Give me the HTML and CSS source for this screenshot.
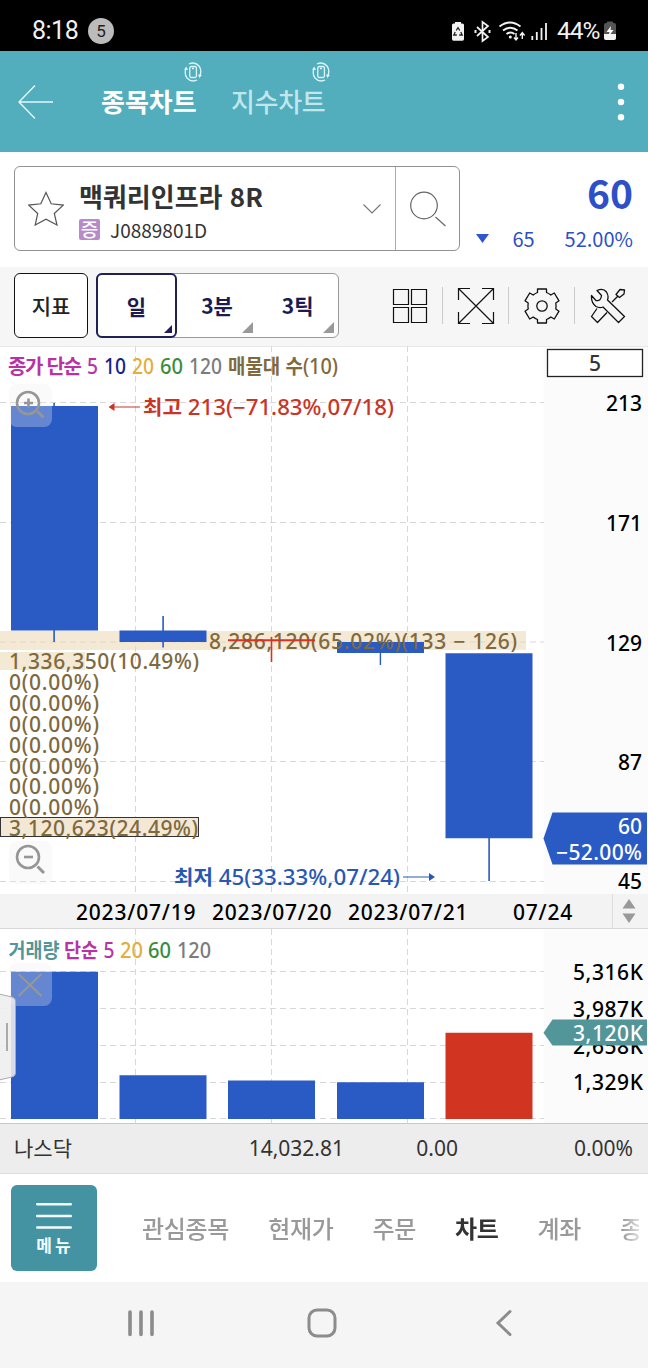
FILE: index.html
```html
<!DOCTYPE html>
<html lang="ko">
<head>
<meta charset="utf-8">
<title>종목차트</title>
<link rel="stylesheet" href="styles.css">
</head>
<body>
<div class="screen">
  <div class="status">
    <span class="clock">8:18</span><span class="count">5</span>
    <svg class="status-icons" width="104" height="24" viewBox="450 18 104 24" fill="none" stroke="#f2f2f2" stroke-width="1.7">
      <path d="M452 24q0-1.500 1.500-1.500h1.500v-1.500h6v1.500h1.500q1.500 0 1.500 1.500v14q0 1.800-1.500 1.800h-9q-1.500 0-1.500-1.800z" fill="#f2f2f2" stroke="none"/>
      <path d="M456.200 29.500l1.800-2.800 1.800 2.800M460.800 31l1.400 3h-3M456.800 34h-3l1.400-3" stroke="#222" stroke-width="1.300"/>
      <path d="M477 26l11 10-5.500 4v-19L488 25l-11 10"/>
      <path d="M475.500 29v3M489.500 29v3" stroke-width="2"/>
      <path d="M499.500 25.500q10.500-8 21 0M503 29.500q7.500-5.500 14.500 0M506.500 33q4-2.800 8 0" stroke-width="2"/>
      <circle cx="510.300" cy="36" r="1.500" fill="#f2f2f2" stroke="none"/>
      <path d="M516 32v7M514 36.500l2 2.500 2-2.500M522.300 38v-6M520 34.500l2.300-2.800 2.300 2.800" stroke-width="1.400"/>
      <path d="M532.300 35v4M536.800 31v8M541.500 27v12M546 22v17" stroke-width="1.800"/>
    </svg>
    <span class="percent">44%</span>
    <svg width="14" height="20" viewBox="0 0 14 20"><path d="M1 4q0-2 2-2h1V.500h6V2h1q2 0 2 2v13q0 2-2 2H3q-2 0-2-2z" fill="#555"/><path d="M1 13h12v4q0 2-2 2H3q-2 0-2-2z" fill="#f2f2f2"/><path d="M8 5L3.500 11H6.500L5.500 15.500 10.500 9H7.500z" fill="#fff"/></svg>
  </div>

  <div class="header">
    <svg class="back" width="36" height="36" viewBox="0 0 36 36" fill="none" stroke="#e4f8fb" stroke-width="1.400"><path d="M17 1.500L1 18l16 16.500M1 18h34"/></svg>
    <div class="htab active"><svg class="rot" width="20" height="20" viewBox="0 0 20 20"><use href="#rotate"/></svg>종목차트</div>
    <div class="htab"><svg class="rot" width="20" height="20" viewBox="0 0 20 20"><use href="#rotate"/></svg>지수차트</div>
    <svg class="more" width="8" height="40" viewBox="0 0 8 40" fill="#fff"><circle cx="4" cy="4.700" r="3.200"/><circle cx="4" cy="20" r="3.200"/><circle cx="4" cy="35.300" r="3.200"/></svg>
  </div>

  <div class="stock">
    <div class="picker">
      <svg class="star" width="36" height="35" viewBox="0 0 36 35" fill="none" stroke="#555" stroke-width="1.200"><path d="M18 1.500l5.200 11.300 12 1.300-8.900 8.400 2.700 11.500L18 28.200 7.200 34l2.500-11.500L.800 14.100l12-1.300z"/></svg>
      <div class="names">
        <div class="name">맥쿼리인프라 8R</div>
        <div class="code"><span class="badge">증</span>J0889801D</div>
      </div>
      <svg class="chev" width="18" height="12" viewBox="0 0 18 12" fill="none" stroke="#777" stroke-width="1.200"><path d="M.500 1.500L9 10l8.500-8.500"/></svg>
      <div class="search"><svg width="36" height="36" viewBox="0 0 36 36" fill="none" stroke="#666" stroke-width="1.200"><circle cx="14" cy="14.500" r="13.300"/><path d="M25.500 26L35.500 35"/></svg></div>
    </div>
    <div class="quote">
      <div class="price">60</div>
      <div class="change"><svg width="13" height="10" viewBox="0 0 13 10"><path d="M0 0h13L6.500 9z" fill="#2f55d0"/></svg><span class="diff">65</span><span>52.00%</span></div>
    </div>
  </div>

  <div class="tools">
    <div class="indicator">지표</div>
    <div class="periods">
      <div class="period on">일</div><div class="period">3분</div><div class="period">3틱</div>
    </div>
    <div class="icons">
      <div class="tool"><svg width="36" height="36" viewBox="0 0 36 36" fill="none" stroke="#111" stroke-width="1.200"><path d="M1.500 1.500h15v15h-15zM19.500 1.500h15v15h-15zM1.500 19.500h15v15h-15zM19.500 19.500h15v15h-15z"/></svg></div>
      <div class="tool"><svg width="38" height="38" viewBox="0 0 38 38" fill="none" stroke="#111" stroke-width="1.200"><path d="M13 1.500H1.500V13M25 1.500h11.500V13M13 36.500H1.500V25M25 36.500h11.500V25M1.500 1.500l35 35M36.500 1.500l-35 35"/></svg></div>
      <div class="tool"><svg width="36" height="36" viewBox="-18 -18 36 36" fill="none" stroke="#111" stroke-width="1.300" stroke-linejoin="round"><circle r="5.200"/><path d="M-4.500-17h9v3.500Q7-12.500 8.800-11L12.300-13 17-5.200 13.800-3Q14.300 0 13.800 3L17 5.200 12.300 13 8.800 11Q7 12.500 4.500 13.500V17h-9V13.500Q-7 12.500-8.800 11L-12.300 13-17 5.200-13.800 3Q-14.300 0-13.800-3L-17-5.200-12.300-13-8.800-11Q-7-12.500-4.500-13.500z"/></svg></div>
      <div class="tool"><svg width="36" height="36" viewBox="0 0 36 36" fill="none" stroke="#111" stroke-width="1.300" stroke-linejoin="round"><path d="M7 2.500Q13-.500 16.500 4 19 8 17.500 12L34.500 28.500 28.500 34.500 13 19Q9.500 20.300 6 18.500 1 15 1.500 7.500L6 12.500Q11 13.500 11.500 7.500z"/><path d="M7 20.500L1.500 28.500 7.500 34.500 17 24.500M22 14L28 8M26 6.500L30 1.500 34.500 2 34 6 29.500 9.500z"/></svg></div>
    </div>
  </div>

  <svg class="chart" width="648" height="548" viewBox="0 346 648 548">
    <rect x="543.500" y="346" width="104.500" height="548" fill="#fbfbfb"/>
    <path class="grid" d="M135.500 346V894M271.500 346V894M407.500 346V894M0 402.500H544M0 522.500H544M0 642H544M0 761.500H544M0 881.500H544"/>
    <path d="M0 346.300H648" stroke="#e3e3e3"/>
    <path d="M0 631H526v19H0zM0 652H85v18H0z" fill="#e9d7b1" fill-opacity=".55"/>
    <g fill="#2a5bc4">
      <path d="M11 406h87v224.500H11zM119.500 630.500h87V642h-87zM337 642h87v11h-87zM445.500 653.300h87v185h-87z"/>
      <path d="M53.300 403h1.600v239h-1.600zM162.300 616h1.600v31.500h-1.600zM379.700 650h1.400v15h-1.400zM488.300 835h1.600v46h-1.600z"/>
    </g>
    <rect x=".500" y="817.500" width="198" height="19" fill="#f2e8d5" stroke="#333"/>
    <g class="txt" fill="#80693d">
      <text x="209" y="648.500" textLength="308">8,286,120(65.02%)(133 − 126)</text>
      <text x="9" y="669" textLength="190">1,336,350(10.49%)</text>
      <text x="9" y="690" textLength="90">0(0.00%)</text>
      <text x="9" y="711" textLength="90">0(0.00%)</text>
      <text x="9" y="731.500" textLength="90">0(0.00%)</text>
      <text x="9" y="752.500" textLength="90">0(0.00%)</text>
      <text x="9" y="773.500" textLength="90">0(0.00%)</text>
      <text x="9" y="794" textLength="90">0(0.00%)</text>
      <text x="9" y="815" textLength="90">0(0.00%)</text>
      <text x="9" y="835.500" textLength="189">3,120,623(24.49%)</text>
    </g>
    <path d="M228 639.300h87v2h-87zM270.700 637h1.600v25h-1.600z" fill="#d63324"/>
    <g class="txt">
      <text class="ko" x="8" y="374" textLength="74" fill="#b832a5">종가 단순</text>
      <text x="87" y="374" textLength="11" lengthAdjust="spacingAndGlyphs" fill="#b832a5">5</text>
      <text x="104" y="374" textLength="22" lengthAdjust="spacingAndGlyphs" fill="#142489">10</text>
      <text x="132" y="374" textLength="22" lengthAdjust="spacingAndGlyphs" fill="#e2ae3c">20</text>
      <text x="160" y="374" textLength="23" lengthAdjust="spacingAndGlyphs" fill="#398e3e">60</text>
      <text x="189" y="374" textLength="33" lengthAdjust="spacingAndGlyphs" fill="#7c7c7c">120</text>
      <text x="228" y="374" textLength="110" lengthAdjust="spacingAndGlyphs" fill="#80693d"><tspan class="ko">매물대 수</tspan>(10)</text>
    </g>
    <text class="txt" x="143" y="415" textLength="251" lengthAdjust="spacingAndGlyphs" fill="#c93426"><tspan class="ko">최고</tspan> 213(−71.83%,07/18)</text>
    <path d="M140 407H113" stroke="#c93426"/><path d="M108.500 407l6-4v8z" fill="#c93426"/>
    <text class="txt" x="174" y="885" textLength="226" lengthAdjust="spacingAndGlyphs" fill="#2858b4"><tspan class="ko">최저</tspan> 45(33.33%,07/24)</text>
    <path d="M403 877h28" stroke="#2858b4"/><path d="M435 877l-6-4v8z" fill="#2858b4"/>
    <g class="txt" text-anchor="end">
      <text x="642" y="411">213</text><text x="642" y="530.500">171</text><text x="642" y="650.500">129</text><text x="642" y="770">87</text><text x="642" y="889">45</text>
    </g>
    <rect x="547.500" y="349.500" width="95" height="27" fill="#fff" stroke="#222" stroke-width="1.300"/>
    <text class="txt" x="595" y="371" text-anchor="middle" fill="#333">5</text>
    <path d="M543.500 838.500L552.500 812.500H647V864.500H552.500z" fill="#2a5bc4"/>
    <g class="txt" text-anchor="end" fill="#fff"><text x="642" y="833.500">60</text><text x="642" y="860" textLength="86">−52.00%</text></g>
    <g fill="#eee" fill-opacity=".3"><rect x="9" y="384" width="43" height="43" rx="8"/><rect x="9" y="841" width="43" height="43" rx="8"/></g>
    <g fill="none" stroke="#969696" stroke-width="2.600"><circle cx="28" cy="403" r="11"/><path d="M24 403h9M28.500 398.500v9"/><path d="M37.500 411.500l6 6" stroke-width="3"/><circle cx="28" cy="857" r="11"/><path d="M24 857h9"/><path d="M37.500 866.500l6.500 6.500" stroke-width="3"/></g>
  </svg>

  <div class="dates">
    <span>2023/07/19</span><span>2023/07/20</span><span>2023/07/21</span><span class="last">07/24</span>
    <div class="sorter"><svg width="14" height="24" viewBox="0 0 14 24" fill="#999"><path d="M7 0l6.500 9.500H.500zM7 24l6.500-9.500H.500z"/></svg></div>
  </div>

  <svg class="chart" width="648" height="194" viewBox="0 929 648 194">
    <rect x="543.500" y="929" width="104.500" height="194" fill="#fbfbfb"/>
    <path class="grid" d="M135.500 929V1123M271.500 929V1123M407.500 929V1123M0 971.500H544M0 1008.500H544M0 1045.500H544M0 1082.500H544M0 1118.500H544"/>
    <path d="M11 971.700h87V1119H11zM119.500 1075.200h87V1119h-87zM228 1080.500h87v38.500h-87zM337 1082.200h87v36.800h-87z" fill="#2a5bc4"/>
    <path d="M445.500 1032.700h87V1119h-87z" fill="#d23422"/>
    <g class="txt">
      <text class="ko" x="8.500" y="958" textLength="51" lengthAdjust="spacingAndGlyphs" fill="#52969a">거래량</text>
      <text class="ko" x="64" y="958" textLength="34" lengthAdjust="spacingAndGlyphs" fill="#b832a5">단순</text>
      <text x="103.500" y="958" textLength="11" lengthAdjust="spacingAndGlyphs" fill="#b832a5">5</text>
      <text x="120" y="958" textLength="23" lengthAdjust="spacingAndGlyphs" fill="#e2ae3c">20</text>
      <text x="148" y="958" textLength="23" lengthAdjust="spacingAndGlyphs" fill="#398e3e">60</text>
      <text x="177" y="958" textLength="34" lengthAdjust="spacingAndGlyphs" fill="#7c7c7c">120</text>
    </g>
    <g class="txt"><text x="573" y="980" textLength="70">5,316K</text><text x="573" y="1017" textLength="70">3,987K</text><text x="573" y="1053.500" textLength="70">2,658K</text><text x="573" y="1090" textLength="70">1,329K</text></g>
    <path d="M543.500 1032.700L552.500 1019.500H647V1045.500H552.500z" fill="#52969a"/>
    <text class="txt" x="573" y="1041" textLength="70" fill="#fff">3,120K</text>
    <rect x="9" y="963" width="43" height="43" rx="8" fill="#eee" fill-opacity=".3"/>
    <path d="M18.500 974l23 22M41.500 974l-23 22" stroke="#969696" stroke-width="2.200"/>
    <path d="M-1 994L12 997q3.500 1 3.500 4v72q0 3-3.500 4L-1 1080z" fill="#eee" fill-opacity=".88" stroke="#aaa"/>
    <path d="M7 1023v28" stroke="#999" stroke-width="1.600"/>
  </svg>

  <div class="index"><span class="iname">나스닥</span><span>14,032.81</span><span>0.00</span><span>0.00%</span></div>

  <div class="tabs">
    <div class="menu"><svg width="36" height="28" viewBox="0 0 36 28" stroke="#f4ffff" stroke-width="2.600" stroke-linecap="round"><path d="M1.300 2.300h33.400M1.300 14h33.400M1.300 25.500h33.400"/></svg><span>메뉴</span></div>
    <div class="tablist"><span>관심종목</span><span>현재가</span><span>주문</span><span class="cur">차트</span><span>계좌</span><span>종목</span></div>
  </div>

  <div class="nav">
    <svg width="28" height="28" viewBox="0 0 28 28" stroke="#8c8c8c" stroke-width="3.600" stroke-linecap="round"><path d="M3 3v22.500M14 3v22.500M25 3v22.500"/></svg>
    <svg width="30" height="30" viewBox="0 0 30 30" fill="none" stroke="#8c8c8c" stroke-width="3"><rect x="2" y="2" width="26" height="26" rx="8"/></svg>
    <svg width="18" height="28" viewBox="0 0 18 28" fill="none" stroke="#8c8c8c" stroke-width="3" stroke-linecap="round"><path d="M15 2.500L3 14l12 11.500"/></svg>
  </div>
</div>
<svg width="0" height="0" class="defs"><defs><g id="rotate" fill="none" stroke="#dff6f9" stroke-width="1.300"><rect x="6.800" y="4.500" width="6.600" height="11" rx="1.500"/><path d="M9 6.500h2M6 1.800Q12-.500 16 4q3 4 1 9.500M14 18.200Q8 20.500 4 16 1 12 3 6.500"/><path d="M1 7.500l2.300-3 1.700 3.500zM15 12.500l4 .5-2.700 3z" fill="#dff6f9" stroke="none"/></g></defs></svg>
</body>
</html>
```

FILE: styles.css
```css
* { box-sizing: border-box; }
body { margin: 0; background: #fff; }
.screen {
  width: 648px; height: 1368px; overflow: hidden;
  display: flex; flex-direction: column;
  font-family: "Noto Sans CJK KR", sans-serif; color: #333;
}
.screen > * { flex: none; }
.defs { position: absolute; }
svg { display: block; flex: none; }

.status { height: 51px; background: #000; color: #f2f2f2; display: flex; align-items: center; padding: 10px 0 0 32px; font-family: Roboto, sans-serif; font-size: 25px; line-height: 40px; }
.clock { width: 56px; letter-spacing: -.5px; }
.count { width: 26px; height: 26px; border-radius: 50%; background: #bbb; color: #222; font-size: 17px; line-height: 26px; text-align: center; }
.status-icons { margin-left: 336px; }
.percent { width: 46px; margin-left: 3px; font-size: 24.5px; letter-spacing: -1px; }

.header { height: 101px; background: #52adbd; display: flex; align-items: center; padding-left: 18px; color: #c2e6eb; }
.htab { position: relative; width: 96px; margin-left: 47px; font-size: 26px; font-weight: 500; line-height: 36px; white-space: nowrap; letter-spacing: -.3px; margin-top: -2px; }
.htab + .htab { margin-left: 34px; }
.htab.active { color: #fff; font-weight: 700; letter-spacing: 0; }
.rot { position: absolute; left: 82px; top: -21px; }
.htab + .htab .rot { left: 80px; }
.more { margin-left: 290px; }

.stock { height: 115px; padding: 14px 15px 0 14px; display: flex; justify-content: space-between; }
.picker { width: 446px; height: 85px; border: 1px solid #929292; border-radius: 6px; display: flex; align-items: center; }
.star { margin-left: 13px; }
.names { margin-left: 15px; width: 270px; padding-top: 5px; }
.name { font-size: 26px; line-height: 34px; font-weight: 700; white-space: nowrap; }
.code { display: flex; align-items: center; font-size: 19px; line-height: 28px; margin-top: 3px; }
.badge { width: 21px; height: 21px; margin-right: 10px; border-radius: 2px; background: #b68bc8; color: #fff; font-size: 19px; line-height: 20px; text-align: center; font-weight: 500; }
.chev { margin-left: 14px; }
.search { margin-left: 14px; height: 83px; width: 64px; border-left: 1px solid #aaa; display: flex; align-items: center; justify-content: center; }
.quote { flex: 1; color: #2d50c8; text-align: right; }
.price { font: 700 39px/52px "Noto Sans CJK KR", sans-serif; }
.change { display: flex; justify-content: flex-end; align-items: center; font-size: 20px; line-height: 34px; margin-top: 4px; }
.diff { margin: 0 30px 0 23px; }

.tools { height: 79px; background: #f6f6f6; display: flex; align-items: flex-start; padding: 6px 0 0 14px; font-size: 21px; font-weight: 500; }
.indicator { width: 74px; height: 65px; border: 1.500px solid #111; border-radius: 6px; background: #fff; line-height: 62px; text-align: center; color: #222; }
.periods { margin-left: 8px; width: 243px; height: 65px; border: 1px solid #999; border-radius: 6px; background: #fff; display: flex; color: #1b1b50; }
.period { position: relative; width: 81px; height: 63px; line-height: 62px; text-align: center; font-weight: 700; }
.period::after { content: ""; position: absolute; right: 4px; bottom: 4px; border-left: 11px solid transparent; border-bottom: 11px solid #999; }
.period.on { height: 65px; margin: -1px 0 0 -1px; border: 2px solid #202057; border-radius: 6px; }
.period.on::after { right: 3px; bottom: 3px; border-left-width: 8px; border-bottom: 8px solid #202057; }
.icons { display: flex; align-items: center; height: 65px; margin-left: 38px; }
.tool { width: 66px; height: 37px; display: flex; align-items: center; justify-content: center; border-right: 1px solid #ccc; }
.tool:last-child { border: 0; }

.chart { background: #fff; overflow: hidden; }
.grid { fill: none; stroke: #d8d8d8; stroke-width: 1; stroke-dasharray: 6 4; }
.txt { font: 500 21px "Noto Sans", "Noto Sans CJK KR", sans-serif; }
.ko { font: 700 20px "Noto Sans CJK KR", sans-serif; }

.dates { height: 35px; background: #f3f3f3; border-bottom: 1px solid #d8d8d8; display: flex; padding-left: 76px; font: 500 21px/36px "Noto Sans", sans-serif; color: #000; }
.dates span { width: 136px; letter-spacing: .8px; }
.dates .last { padding-left: 29px; width: 128px; }
.sorter { width: 33px; border-left: 1px solid #ddd; display: flex; align-items: center; justify-content: center; }

.index { height: 51px; background: #ededed; border-top: 1px solid #c8c8c8; border-bottom: 1px solid #ddd; display: grid; grid-template-columns: 130px 200px 114px 175px; padding-left: 14px; font: 21px/48px "Noto Sans", "Noto Sans CJK KR", sans-serif; text-align: right; color: #333; }
.iname { text-align: left; }

.tabs { height: 108px; display: flex; align-items: center; padding-left: 11px; }
.menu { width: 86px; height: 86px; border-radius: 6px; background: #4493a2; color: #f4ffff; display: flex; flex-direction: column; align-items: center; padding-top: 17px; font-size: 17px; line-height: 27px; font-weight: 700; letter-spacing: 3px; }
.menu span { margin-top: 1px; padding-left: 2px; }
.tablist { margin-left: 45px; width: 497px; overflow: hidden; display: flex; gap: 39px; white-space: nowrap; font-size: 24px; line-height: 40px; font-weight: 500; letter-spacing: -.3px; color: #999; -webkit-mask-image: linear-gradient(90deg, #000 480px, transparent 505px); mask-image: linear-gradient(90deg, #000 480px, transparent 505px); }
.tablist .cur { color: #333; font-weight: 700; }

.nav { height: 86px; background: #f5f5f5; display: flex; align-items: center; padding: 0 0 4px 127px; }
.nav svg + svg { margin-left: 152px; }
.nav svg + svg + svg { margin-left: 158px; }
```
